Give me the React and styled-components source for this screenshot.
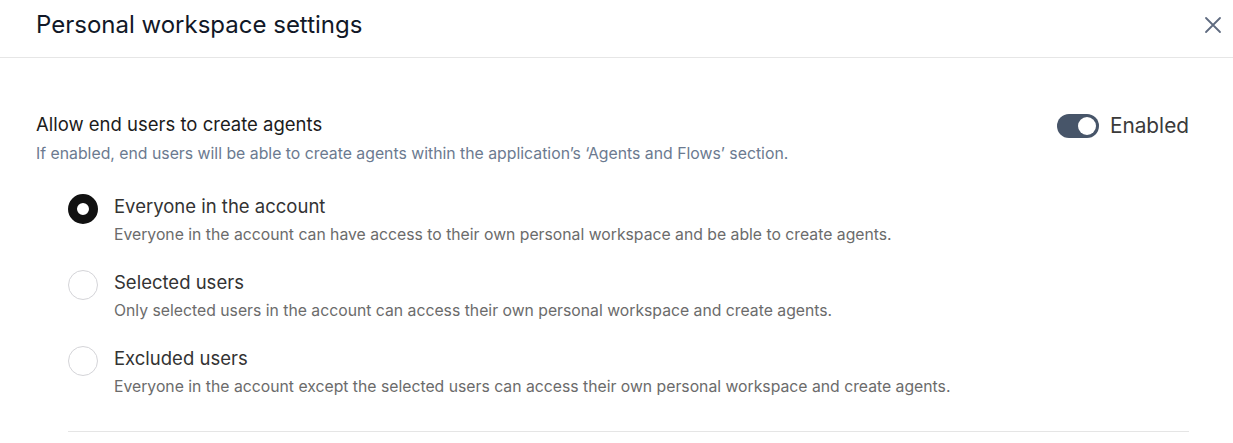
import React from "react";
import styled, { createGlobalStyle } from "styled-components";

const Global = createGlobalStyle`
  html, body { margin: 0; padding: 0; background: #fff; }
  body { font-family: Inter, "Noto Sans", sans-serif; -webkit-font-smoothing: antialiased; }
  * { box-sizing: border-box; }
`;

const Panel = styled.div`
  width: 1233px;
  height: 443px;
  background: #fff;
  display: flex;
  flex-direction: column;
  overflow: hidden;
`;

const Header = styled.header`
  height: 58px;
  display: flex;
  align-items: center;
  justify-content: space-between;
  padding: 0 8px 8px 36px;
  border-bottom: 1px solid #e6e6e6;
`;

const Title = styled.h1`
  margin: 0;
  font-size: 24px;
  font-weight: 400;
  color: #111827;
  line-height: 30px;
`;

const CloseButton = styled.button`
  border: 0;
  background: transparent;
  padding: 0;
  width: 24px;
  height: 24px;
  display: flex;
  align-items: center;
  justify-content: center;
  color: #5f6b80;
  cursor: pointer;
`;

const Body = styled.div`
  padding: 54px 44px 0 36px;
  display: flex;
  flex-direction: column;
`;

const SectionTop = styled.div`
  display: flex;
  justify-content: space-between;
  align-items: flex-start;
`;

const SectionText = styled.div`
  display: flex;
  flex-direction: column;
  gap: 7px;
`;

const SectionTitle = styled.div`
  font-size: 18.5px;
  font-weight: 400;
  color: #1c1c1c;
  line-height: 24px;
`;

const SectionDesc = styled.div`
  font-size: 15.8px;
  color: #6b7a90;
  line-height: 22px;
`;

const ToggleWrap = styled.label`
  display: flex;
  align-items: center;
  gap: 11px;
  margin-top: 2px;
  font-size: 20.8px;
  line-height: 24px;
  color: #3a3a3a;
`;

const Track = styled.span`
  width: 42px;
  height: 24px;
  border-radius: 12px;
  background: ${p => (p.$on ? "#475569" : "#cbd5e1")};
  display: flex;
  align-items: center;
  justify-content: ${p => (p.$on ? "flex-end" : "flex-start")};
  padding: 0 3px;
`;

const Knob = styled.span`
  width: 18px;
  height: 18px;
  border-radius: 50%;
  background: #fff;
`;

const Options = styled.div`
  display: flex;
  flex-direction: column;
  gap: 24px;
  padding: 29px 0 0 32px;
`;

const Option = styled.div`
  display: flex;
  gap: 16px;
  align-items: flex-start;
`;

const Radio = styled.span`
  flex: none;
  width: 30px;
  height: 30px;
  border-radius: 50%;
  background: #fff;
  border: ${p => (p.$checked ? "9px solid #111" : "1px solid #d4d4d8")};
`;

const OptionText = styled.div`
  display: flex;
  flex-direction: column;
  gap: 6px;
`;

const OptionLabel = styled.div`
  font-size: 18.5px;
  color: #333;
  line-height: 24px;
`;

const OptionDesc = styled.div`
  font-size: 15.75px;
  color: #6b6b6b;
  line-height: 22px;
`;

const Divider = styled.hr`
  margin: 33px 0 0 32px;
  border: 0;
  border-top: 1px solid #e5e5e5;
`;

const options = [
  {
    label: "Everyone in the account",
    desc: "Everyone in the account can have access to their own personal workspace and be able to create agents.",
    checked: true,
  },
  {
    label: "Selected users",
    desc: "Only selected users in the account can access their own personal workspace and create agents.",
  },
  {
    label: "Excluded users",
    desc: "Everyone in the account except the selected users can access their own personal workspace and create agents.",
  },
];

export default function App() {
  return (
    <>
      <Global />
      <Panel>
        <Header>
          <Title>Personal workspace settings</Title>
          <CloseButton aria-label="Close">
            <svg width="18" height="18" viewBox="0 0 18 18" fill="none" stroke="currentColor" strokeWidth="1.8" strokeLinecap="round">
              <path d="M2 2L16 16M16 2L2 16" />
            </svg>
          </CloseButton>
        </Header>
        <Body>
          <SectionTop>
            <SectionText>
              <SectionTitle>Allow end users to create agents</SectionTitle>
              <SectionDesc>
                If enabled, end users will be able to create agents within the application’s ‘Agents and Flows’ section.
              </SectionDesc>
            </SectionText>
            <ToggleWrap>
              <Track $on>
                <Knob />
              </Track>
              Enabled
            </ToggleWrap>
          </SectionTop>
          <Options>
            {options.map(o => (
              <Option key={o.label}>
                <Radio $checked={o.checked} />
                <OptionText>
                  <OptionLabel>{o.label}</OptionLabel>
                  <OptionDesc>{o.desc}</OptionDesc>
                </OptionText>
              </Option>
            ))}
          </Options>
          <Divider />
        </Body>
      </Panel>
    </>
  );
}
